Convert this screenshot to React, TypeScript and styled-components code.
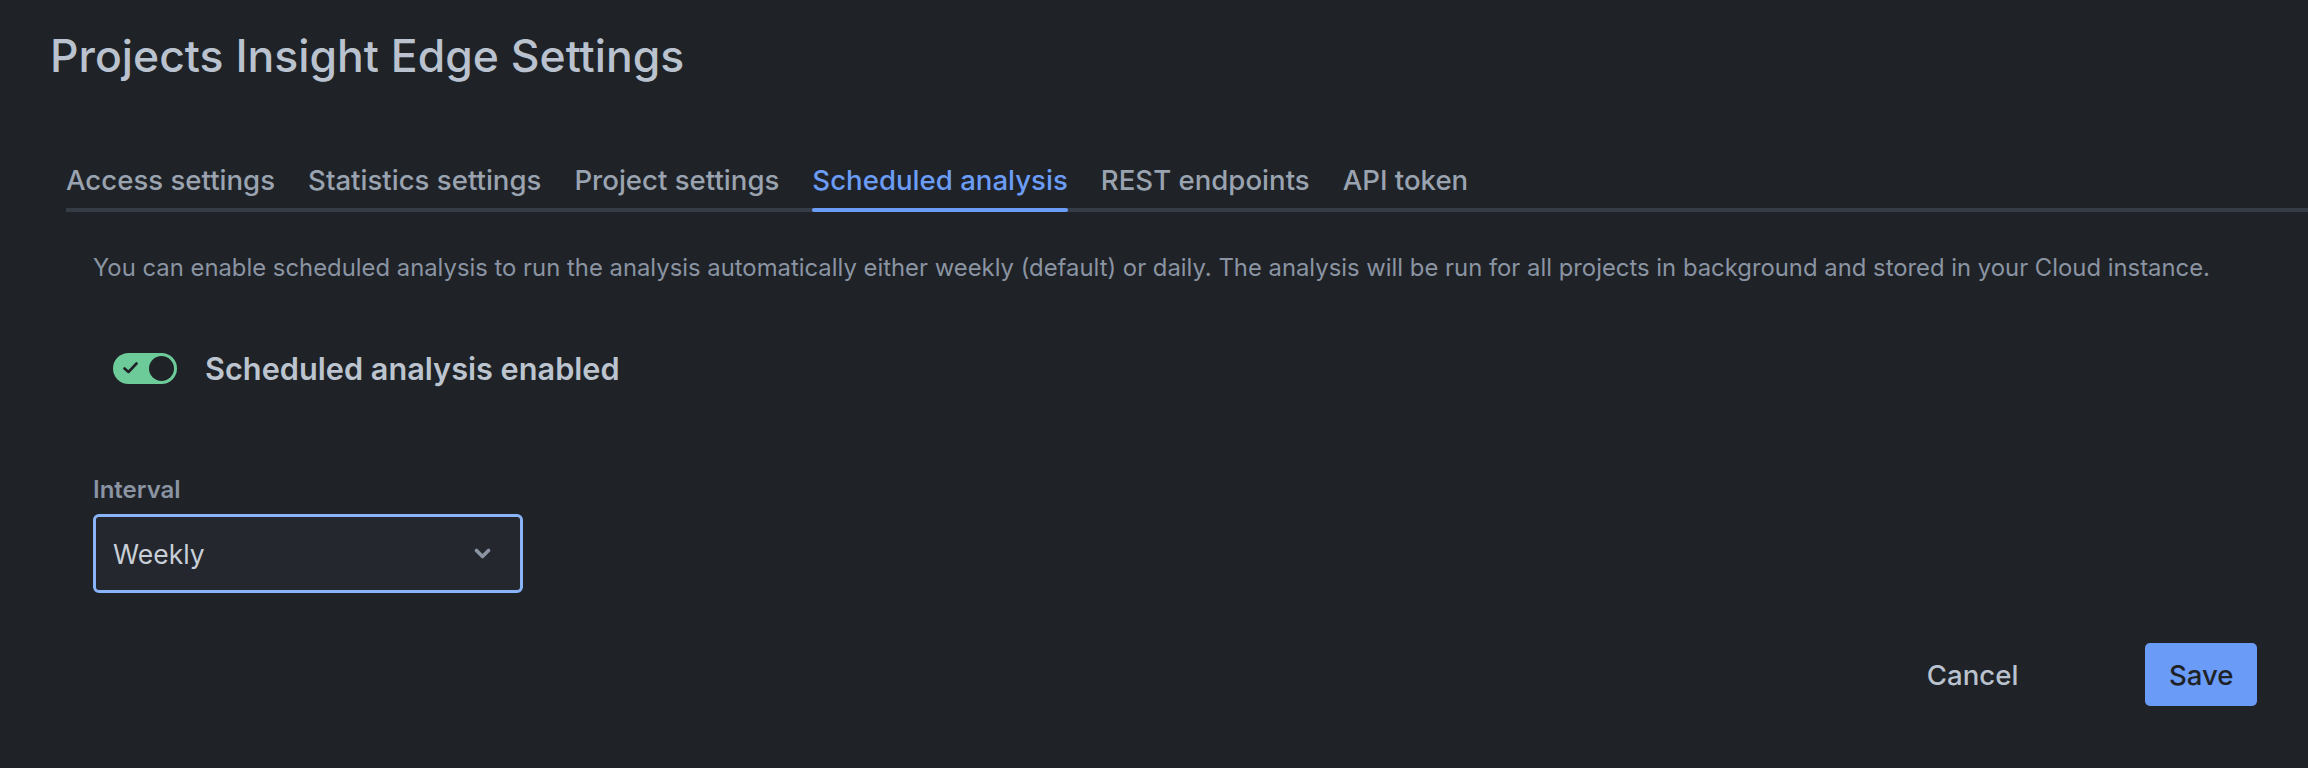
import { useState } from "react";
import styled, { createGlobalStyle } from "styled-components";

const GlobalStyle = createGlobalStyle`
    html, body {
        margin: 0;
        padding: 0;
        background-color: #1f2227;
    }
    * {
        box-sizing: border-box;
    }
`;

const Page = styled.div`
    width: 2308px;
    min-height: 768px;
    padding: 28px 0 0 50px;
    font-family: "Inter", "Noto Sans", sans-serif;
    background-color: #1f2227;
`;

const Title = styled.h1`
    margin: 0;
    font-size: 44.5px;
    line-height: 56px;
    font-weight: 500;
    color: #b9c2ce;
`;

const TabBar = styled.div`
    display: flex;
    gap: 33px;
    margin: 80px 0 0 16px;
    border-bottom: 4px solid #363c45;
`;

const Tab = styled.div<{ $active?: boolean }>`
    position: relative;
    padding-bottom: 12px;
    font-size: 27.6px;
    line-height: 32px;
    font-weight: 500;
    color: ${(p) => (p.$active ? "#6b9cf6" : "#9aa3b0")};
    cursor: pointer;

    &::after {
        content: "";
        display: ${(p) => (p.$active ? "block" : "none")};
        position: absolute;
        left: 0;
        right: 0;
        bottom: -4px;
        height: 4px;
        border-radius: 2px;
        background-color: #6b9cf6;
    }
`;

const Body = styled.div`
    padding: 42px 51px 0 43px;
`;

const Description = styled.p`
    margin: 0;
    font-size: 23.85px;
    line-height: 28px;
    color: #8a94a2;
`;

const ToggleRow = styled.div`
    display: flex;
    align-items: center;
    gap: 28px;
    margin-top: 71px;
    padding-left: 20px;
`;

const Switch = styled.button<{ $on: boolean }>`
    position: relative;
    width: 64px;
    height: 31px;
    padding: 0;
    border: 0;
    border-radius: 16px;
    background-color: ${(p) => (p.$on ? "#6dcb99" : "#454b55")};
    cursor: pointer;
`;

const Knob = styled.span<{ $on: boolean }>`
    position: absolute;
    top: 3px;
    left: ${(p) => (p.$on ? "36px" : "3px")};
    width: 25px;
    height: 25px;
    border-radius: 50%;
    background-color: #1f2227;
`;

const Check = styled.svg`
    position: absolute;
    left: 10px;
    top: 9px;
`;

const ToggleLabel = styled.span`
    font-size: 30.7px;
    line-height: 31px;
    font-weight: 600;
    color: #bcc4cf;
`;

const FieldLabel = styled.div`
    margin-top: 92px;
    font-size: 24px;
    line-height: 28px;
    font-weight: 600;
    color: #8a94a2;
`;

const Select = styled.div`
    display: flex;
    align-items: center;
    justify-content: space-between;
    width: 430px;
    height: 79px;
    margin-top: 10px;
    padding: 0 29px 0 17px;
    border: 3px solid #8ab4f8;
    border-radius: 6px;
    background-color: #24272d;
    font-size: 26.5px;
    color: #c9cfd8;
    cursor: pointer;
`;

const Footer = styled.div`
    display: flex;
    justify-content: flex-end;
    align-items: center;
    gap: 127px;
    margin-top: 50px;
`;

const Button = styled.button<{ $primary?: boolean }>`
    height: 63px;
    padding: 0 ${(p) => (p.$primary ? "23.5px" : "0")};
    border: 0;
    border-radius: 5px;
    font-family: "Inter", "Noto Sans", sans-serif;
    font-size: 27.6px;
    font-weight: 500;
    color: ${(p) => (p.$primary ? "#1f2227" : "#b9c2ce")};
    background-color: ${(p) => (p.$primary ? "#6a9cf7" : "transparent")};
    cursor: pointer;
`;

const tabs = [
    "Access settings",
    "Statistics settings",
    "Project settings",
    "Scheduled analysis",
    "REST endpoints",
    "API token",
];

export default function App() {
    const [active, setActive] = useState(3);
    const [enabled, setEnabled] = useState(true);

    return (
        <Page>
            <GlobalStyle />
            <Title>Projects Insight Edge Settings</Title>
            <TabBar>
                {tabs.map((t, i) => (
                    <Tab key={t} $active={i === active} onClick={() => setActive(i)}>
                        {t}
                    </Tab>
                ))}
            </TabBar>
            <Body>
                <Description>
                    You can enable scheduled analysis to run the analysis automatically either weekly (default) or daily. The analysis will be run for all projects in background and stored in your Cloud instance.
                </Description>
                <ToggleRow>
                    <Switch $on={enabled} onClick={() => setEnabled(!enabled)}>
                        {enabled && (
                            <Check width="15" height="12" viewBox="0 0 15 12">
                                <polyline
                                    points="1.5,6.5 5.5,10 13.5,1.5"
                                    fill="none"
                                    stroke="#1f2227"
                                    strokeWidth="2.6"
                                    strokeLinecap="round"
                                    strokeLinejoin="round"
                                />
                            </Check>
                        )}
                        <Knob $on={enabled} />
                    </Switch>
                    <ToggleLabel>Scheduled analysis enabled</ToggleLabel>
                </ToggleRow>
                <FieldLabel>Interval</FieldLabel>
                <Select>
                    <span>Weekly</span>
                    <svg width="17" height="12" viewBox="0 0 17 12">
                        <polyline
                            points="2.5,2.5 8.5,8.5 14.5,2.5"
                            fill="none"
                            stroke="#8a94a2"
                            strokeWidth="3.6"
                            strokeLinecap="round"
                            strokeLinejoin="round"
                        />
                    </svg>
                </Select>
                <Footer>
                    <Button>Cancel</Button>
                    <Button $primary>Save</Button>
                </Footer>
            </Body>
        </Page>
    );
}
